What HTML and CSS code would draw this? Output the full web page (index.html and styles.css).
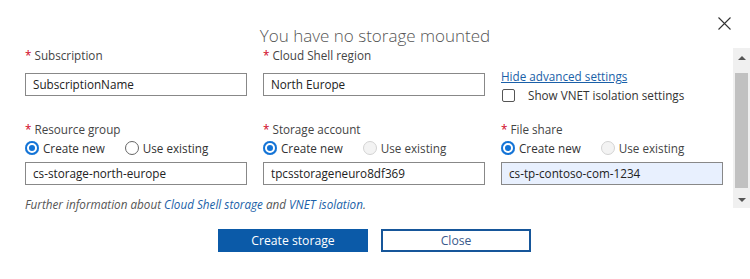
FILE: index.html
```html
<!DOCTYPE html>
<html lang="en">
<head>
<meta charset="utf-8">
<title>You have no storage mounted</title>
<link rel="stylesheet" href="styles.css">
</head>
<body>
<div class="dialog">
  <button class="close-x" aria-label="Close">
    <svg width="13" height="13" viewBox="0 0 13 13"><path d="M0.5 0.5 L12.5 12.5 M12.5 0.5 L0.5 12.5" stroke="#333" stroke-width="1.1" fill="none"/></svg>
  </button>
  <h1 class="title">You have no storage mounted</h1>
  <div class="body">
    <div class="form">
      <div class="grid">
        <div class="field">
          <label class="label"><span class="req">*</span> Subscription</label>
          <div class="input">SubscriptionName</div>
        </div>
        <div class="field">
          <label class="label"><span class="req">*</span> Cloud Shell region</label>
          <div class="input">North Europe</div>
        </div>
        <div class="advanced">
          <a class="link underline" href="#">Hide advanced settings</a>
          <div class="check-row"><span class="checkbox"></span><span>Show VNET isolation settings</span></div>
        </div>
        <div class="field">
          <label class="label"><span class="req">*</span> Resource group</label>
          <div class="radios">
            <span class="opt"><span class="radio on"></span>Create new</span>
            <span class="opt"><span class="radio"></span>Use existing</span>
          </div>
          <div class="input">cs-storage-north-europe</div>
        </div>
        <div class="field">
          <label class="label"><span class="req">*</span> Storage account</label>
          <div class="radios">
            <span class="opt"><span class="radio on"></span>Create new</span>
            <span class="opt dim"><span class="radio off"></span>Use existing</span>
          </div>
          <div class="input">tpcsstorageneuro8df369</div>
        </div>
        <div class="field">
          <label class="label"><span class="req">*</span> File share</label>
          <div class="radios">
            <span class="opt"><span class="radio on"></span>Create new</span>
            <span class="opt dim"><span class="radio off"></span>Use existing</span>
          </div>
          <div class="input filled">cs-tp-contoso-com-1234</div>
        </div>
      </div>
      <p class="info">Further information about <a class="link" href="#">Cloud Shell storage</a> and <a class="link" href="#">VNET isolation</a>.</p>
    </div>
    <div class="scrollbar">
      <span class="arrow up"></span>
      <span class="thumb"></span>
      <span class="arrow down"></span>
    </div>
  </div>
  <div class="actions">
    <button class="btn primary">Create storage</button>
    <button class="btn secondary">Close</button>
  </div>
</div>
</body>
</html>
```
FILE: styles.css
```css
* { box-sizing: border-box; }
html, body { margin: 0; padding: 0; background: #fff; }
body {
  width: 750px;
  height: 279px;
  overflow: hidden;
  font-family: "Open Sans", "Noto Sans", sans-serif;
  font-size: 11.7px;
  color: #444;
}
.dialog { position: relative; width: 750px; height: 279px; }
.close-x {
  position: absolute;
  top: 17px;
  left: 718px;
  padding: 0;
  border: 0;
  background: none;
  line-height: 0;
}
.title {
  margin: 0;
  padding-top: 24px;
  height: 48px;
  text-align: center;
  font-size: 17px;
  line-height: 24px;
  font-weight: 300;
  color: #555;
}
.body { display: flex; height: 160px; }
.form { width: 733px; padding-left: 25px; }
.grid {
  display: grid;
  grid-template-columns: 222px 222px 222px;
  grid-template-rows: 48px auto;
  column-gap: 16px;
  row-gap: 26px;
}
.field { display: flex; flex-direction: column; }
.label { height: 16px; line-height: 15px; color: #444; }
.req { color: #d0021b; }
.grid > .field:nth-child(-n+3) .input { margin-top: 9px; }
.input {
  height: 23px;
  border: 1px solid #888;
  padding: 0 7px;
  line-height: 21px;
  color: #222;
  white-space: nowrap;
}
.input.filled { background: #e8f0fe; }
.radios {
  display: flex;
  height: 18px;
  margin: 1px 0 5px;
  align-items: center;
}
.opt { display: flex; align-items: center; gap: 4px; margin-right: 20px; color: #333; }
.opt.dim { color: #444; }
.radio {
  width: 14px;
  height: 14px;
  border-radius: 50%;
  border: 1px solid #666;
  background: #fff;
}
.radio.on {
  border: 0;
  background: #1273d6;
  box-shadow: inset 0 0 0 2px #1273d6, inset 0 0 0 4px #fff;
}
.radio.off { border-color: #d3d3d3; background: #f3f3f3; }
.advanced { display: flex; flex-direction: column; padding-top: 20px; }
.link { color: #1a5fa8; text-decoration: none; }
.link.underline { text-decoration: underline; line-height: 16px; }
.check-row { display: flex; align-items: center; gap: 13px; margin-top: 3px; height: 16px; color: #333; }
.checkbox {
  width: 13px;
  height: 13px;
  border: 1px solid #555;
  border-radius: 2px;
  margin-left: 1px;
}
.info {
  margin: 11px 0 0;
  font-style: italic;
  line-height: 16px;
  color: #555;
}
.scrollbar {
  width: 17px;
  background: #f0f0f0;
  display: flex;
  flex-direction: column;
  align-items: center;
}
.arrow { width: 0; height: 0; border-left: 4px solid transparent; border-right: 4px solid transparent; }
.arrow.up { border-bottom: 4px solid #555; margin: 8px 0 13px; }
.arrow.down { border-top: 4px solid #555; margin-top: 10px; }
.thumb { width: 13px; height: 115px; background: #c1c1c1; }
.actions {
  display: flex;
  justify-content: center;
  gap: 13px;
  padding-top: 21px;
  padding-right: 1px;
}
.btn {
  width: 150px;
  height: 23px;
  font-family: inherit;
  font-size: 12.2px;
  padding: 0;
  cursor: pointer;
}
.btn.primary { background: #0b5aa8; border: 0; color: #fff; }
.btn.secondary { background: #fff; border: 2px solid #16569a; color: #3a5a8c; }
```
